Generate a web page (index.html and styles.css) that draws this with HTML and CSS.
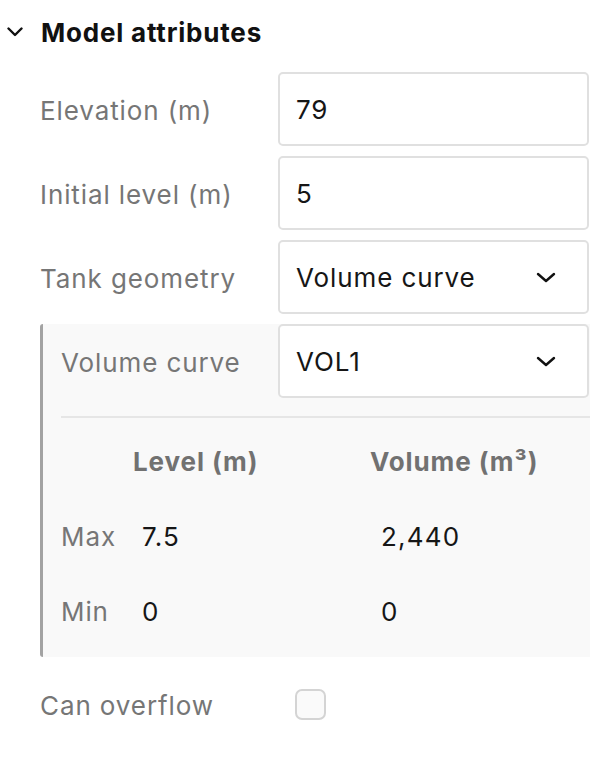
FILE: index.html
```html
<!DOCTYPE html>
<html lang="en">

<head>
<meta charset="UTF-8">
<meta name="viewport" content="width=device-width, initial-scale=1.0">
<title>Model attributes</title>
<link rel="stylesheet" href="styles.css">
</head>

<body>

<div class="panel">
    <div class="panel-header">
        <svg class="toggle" width="16" height="10" viewBox="0 0 16 10">
            <path d="M1.5 1.5 L8 8 L14.5 1.5" fill="none" stroke="#111" stroke-width="2.4" stroke-linecap="round" stroke-linejoin="round"/>
        </svg>
        <h2 class="title">Model attributes</h2>
    </div>

    <div class="form">
        <div class="row">
            <label class="label">Elevation (m)</label>
            <div class="field">79</div>
        </div>
        <div class="row">
            <label class="label">Initial level (m)</label>
            <div class="field">5</div>
        </div>
        <div class="row">
            <label class="label">Tank geometry</label>
            <div class="field select">
                <span>Volume curve</span>
                <svg class="caret" width="20" height="11" viewBox="0 0 20 11">
                    <path d="M2 2 L10 9 L18 2" fill="none" stroke="#111" stroke-width="2.4" stroke-linecap="round" stroke-linejoin="round"/>
                </svg>
            </div>
        </div>

        <div class="subsection">
            <div class="row sub-row">
                <label class="label">Volume curve</label>
                <div class="field select">
                    <span>VOL1</span>
                    <svg class="caret" width="20" height="11" viewBox="0 0 20 11">
                        <path d="M2 2 L10 9 L18 2" fill="none" stroke="#111" stroke-width="2.4" stroke-linecap="round" stroke-linejoin="round"/>
                    </svg>
                </div>
            </div>

            <div class="curve-table">
                <div class="cell"></div>
                <div class="cell head">Level (m)</div>
                <div class="cell head">Volume (m³)</div>

                <div class="cell key">Max</div>
                <div class="cell val level">7.5</div>
                <div class="cell val volume">2,440</div>

                <div class="cell key">Min</div>
                <div class="cell val level">0</div>
                <div class="cell val volume">0</div>
            </div>
        </div>

        <div class="row">
            <label class="label">Can overflow</label>
            <div class="check-wrap">
                <span class="checkbox"></span>
            </div>
        </div>
    </div>
</div>

</body>

</html>
```

FILE: styles.css
```css
body {
    font-family: Inter, "Noto Sans", sans-serif;
    background-color: #ffffff;
    margin: 0;
    padding: 0;
    letter-spacing: 0.9px;
}

.panel {
    width: 590px;
}

.panel-header {
    display: flex;
    align-items: center;
    height: 64px;
    margin-bottom: 8px;
}

.toggle {
    margin-left: 7px;
    margin-right: 18px;
}

.title {
    margin: 0;
    font-size: 26px;
    font-weight: 700;
    color: #111111;
    letter-spacing: 0.8px;
}

.form {
    display: flex;
    flex-direction: column;
    gap: 10px;
    padding-left: 40px;
}

.row {
    display: grid;
    grid-template-columns: 238px 1fr;
    align-items: center;
    height: 74px;
}

.label {
    font-size: 26px;
    color: #767676;
    padding-top: 3px;
}

.field {
    box-sizing: border-box;
    height: 74px;
    margin-right: 1px;
    border: 2px solid #e0e0e0;
    border-radius: 5px;
    background-color: #ffffff;
    padding: 0 16px;
    display: flex;
    align-items: center;
    font-size: 26px;
    color: #161616;
}

.select {
    justify-content: space-between;
    padding-right: 31px;
}

.caret {
    display: block;
}

.subsection {
    background-color: #f9f9f9;
    border-left: 3px solid #a3a3a3;
    border-radius: 3px 0 0 3px;
    padding-left: 18px;
    padding-bottom: 8px;
}

.sub-row {
    grid-template-columns: 217px 1fr;
}

.curve-table {
    margin-top: 18px;
    border-top: 2px solid #e6e6e6;
    padding-top: 6px;
    display: grid;
    grid-template-columns: 72px 237px 1fr;
    grid-auto-rows: 75px;
    align-items: center;
}

.cell {
    font-size: 26px;
}

.head {
    font-weight: 700;
    color: #717171;
}

.key {
    color: #767676;
}

.val {
    color: #161616;
    letter-spacing: 1.2px;
}

.level {
    padding-left: 9px;
}

.volume {
    padding-left: 11px;
}

.check-wrap {
    padding-left: 17px;
    display: flex;
    align-items: center;
}

.checkbox {
    display: block;
    box-sizing: border-box;
    width: 31px;
    height: 31px;
    border: 2px solid #d4d4d4;
    border-radius: 7px;
    background-color: #fafafa;
}
```
